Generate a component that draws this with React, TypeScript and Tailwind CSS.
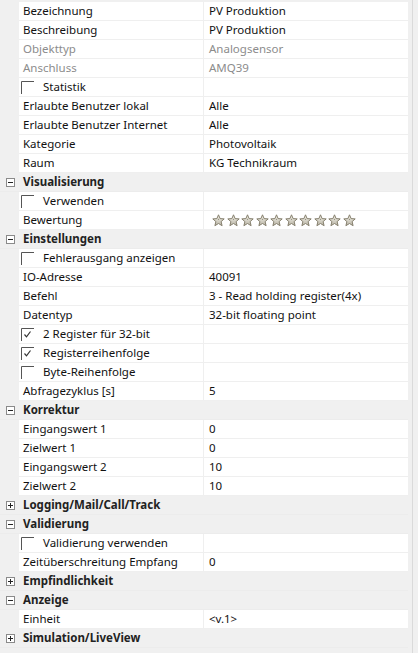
import React from "react"

type Row =
  | { kind: "group"; label: string; open: boolean }
  | { kind: "prop"; label: string; value?: string; disabled?: boolean }
  | { kind: "check"; label: string; checked: boolean }
  | { kind: "stars"; label: string }

const rows: Row[] = [
  { kind: "prop", label: "Bezeichnung", value: "PV Produktion" },
  { kind: "prop", label: "Beschreibung", value: "PV Produktion" },
  { kind: "prop", label: "Objekttyp", value: "Analogsensor", disabled: true },
  { kind: "prop", label: "Anschluss", value: "AMQ39", disabled: true },
  { kind: "check", label: "Statistik", checked: false },
  { kind: "prop", label: "Erlaubte Benutzer lokal", value: "Alle" },
  { kind: "prop", label: "Erlaubte Benutzer Internet", value: "Alle" },
  { kind: "prop", label: "Kategorie", value: "Photovoltaik" },
  { kind: "prop", label: "Raum", value: "KG Technikraum" },
  { kind: "group", label: "Visualisierung", open: true },
  { kind: "check", label: "Verwenden", checked: false },
  { kind: "stars", label: "Bewertung" },
  { kind: "group", label: "Einstellungen", open: true },
  { kind: "check", label: "Fehlerausgang anzeigen", checked: false },
  { kind: "prop", label: "IO-Adresse", value: "40091" },
  { kind: "prop", label: "Befehl", value: "3 - Read holding register(4x)" },
  { kind: "prop", label: "Datentyp", value: "32-bit floating point" },
  { kind: "check", label: "2 Register für 32-bit", checked: true },
  { kind: "check", label: "Registerreihenfolge", checked: true },
  { kind: "check", label: "Byte-Reihenfolge", checked: false },
  { kind: "prop", label: "Abfragezyklus [s]", value: "5" },
  { kind: "group", label: "Korrektur", open: true },
  { kind: "prop", label: "Eingangswert 1", value: "0" },
  { kind: "prop", label: "Zielwert 1", value: "0" },
  { kind: "prop", label: "Eingangswert 2", value: "10" },
  { kind: "prop", label: "Zielwert 2", value: "10" },
  { kind: "group", label: "Logging/Mail/Call/Track", open: false },
  { kind: "group", label: "Validierung", open: true },
  { kind: "check", label: "Validierung verwenden", checked: false },
  { kind: "prop", label: "Zeitüberschreitung Empfang", value: "0" },
  { kind: "group", label: "Empfindlichkeit", open: false },
  { kind: "group", label: "Anzeige", open: true },
  { kind: "prop", label: "Einheit", value: "<v.1>" },
  { kind: "group", label: "Simulation/LiveView", open: false },
]

const ExpandBox = ({ open }: { open: boolean }) => (
  <svg width="9" height="9" viewBox="0 0 9 9" className="block">
    <rect x="0.5" y="0.5" width="8" height="8" fill="#fff" stroke="#8a8a8a" />
    <line x1="2" y1="4.5" x2="7" y2="4.5" stroke="#222" />
    {!open && <line x1="4.5" y1="2" x2="4.5" y2="7" stroke="#222" />}
  </svg>
)

const CheckBox = ({ checked }: { checked: boolean }) => (
  <svg width="13" height="13" viewBox="0 0 13 13" className="block">
    <path d="M0.5 13 V0.5 H13" fill="none" stroke="#555" />
    {checked && (
      <path d="M3.5 6.5 L5.5 8.8 L9.5 3.5" fill="none" stroke="#333" strokeWidth="1.2" />
    )}
  </svg>
)

const Star = () => (
  <svg width="13" height="13" viewBox="0 0 13 13" className="block">
    <defs>
      <linearGradient id="sg" x1="0" y1="0" x2="0" y2="1">
        <stop offset="0" stopColor="#f4f2ea" />
        <stop offset="1" stopColor="#b9b5a6" />
      </linearGradient>
    </defs>
    <path
      d="M6.5 0.8 L8.1 4.6 L12.2 4.9 L9.1 7.6 L10.1 11.7 L6.5 9.5 L2.9 11.7 L3.9 7.6 L0.8 4.9 L4.9 4.6 Z"
      fill="url(#sg)"
      stroke="#857f6d"
      strokeWidth="1"
      strokeLinejoin="round"
    />
    <path d="M6.5 4.5 L7.2 6.1 L5.8 6.1 Z" fill="#8d8877" />
  </svg>
)

export default function App() {
  return (
    <div
      className="w-[418px] h-[653px] bg-[#f0f0f0] flex overflow-hidden text-[11.5px] text-[#111]"
      style={{ fontFamily: '"Noto Sans", "Open Sans", sans-serif' }}
    >
      <div className="w-[408px] pt-[2px]">
        {rows.map((r, i) => {
          if (r.kind === "group") {
            return (
              <div key={i} className="h-[19px] flex items-center border-b border-[#ececec]">
                <div className="w-[19px] flex justify-center pl-[1px]">
                  <ExpandBox open={r.open} />
                </div>
                <span className="pl-[4px] font-bold text-[#222]">{r.label}</span>
              </div>
            )
          }
          return (
            <div key={i} className="h-[19px] flex">
              <div className="w-[19px] shrink-0" />
              <div className="flex-1 flex bg-white border-b border-[#efefef]">
                <div className="w-[185px] shrink-0 flex items-center border-r border-[#efefef]">
                  {r.kind === "check" ? (
                    <div className="flex items-center pl-[2px]">
                      <CheckBox checked={r.checked} />
                      <span className="pl-[9px]">{r.label}</span>
                    </div>
                  ) : (
                    <span className={"pl-[4px] " + (r.kind === "prop" && r.disabled ? "text-[#8c8c8c]" : "")}>
                      {r.label}
                    </span>
                  )}
                </div>
                <div className="flex-1 flex items-center pl-[5px]">
                  {r.kind === "prop" && (
                    <span className={r.disabled ? "text-[#8c8c8c]" : ""}>{r.value}</span>
                  )}
                  {r.kind === "stars" && (
                    <div className="flex gap-[1.5px] pl-[3px]">
                      {Array.from({ length: 10 }).map((_, k) => (
                        <Star key={k} />
                      ))}
                    </div>
                  )}
                </div>
              </div>
            </div>
          )
        })}
      </div>
      <div className="w-[10px] flex justify-center">
        <div className="w-px h-full bg-[#dadada] ml-[-2px]" />
      </div>
    </div>
  )
}
